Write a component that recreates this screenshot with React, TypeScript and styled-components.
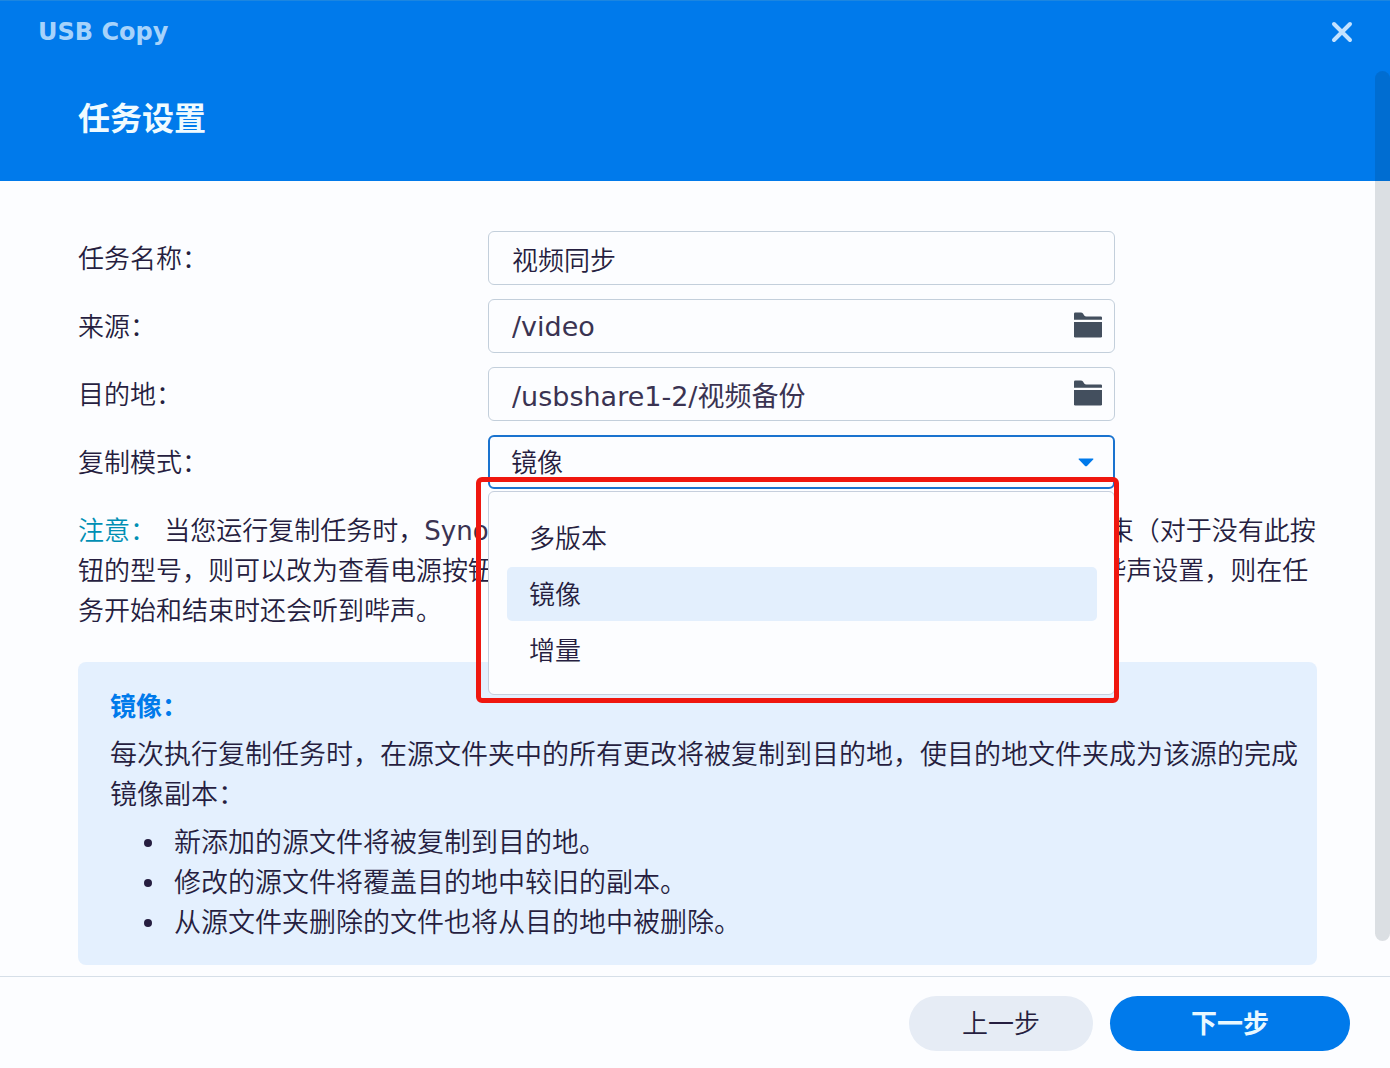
import React, { useState } from "react";
import styled, { createGlobalStyle } from "styled-components";

const font = '"DejaVu Sans", "Noto Sans CJK SC", sans-serif';
const ink = "#261e40";
const softInk = "#3a3352";
const blue = "#007aeb";

const GlobalStyle = createGlobalStyle`
  *, *::before, *::after { box-sizing: border-box; }
  body {
    margin: 0;
    background: #fcfdff;
    color: ${ink};
    font: 350 26px/40px ${font};
    text-spacing-trim: space-all;
  }
  input, select, button { font: inherit; color: inherit; }
`;

const Dialog = styled.div`
  position: relative;
  display: flex;
  flex-direction: column;
  min-height: 100vh;
`;

const Header = styled.header`
  padding: 0 37px 38px 38px;
  background: ${blue};
  border-top: 1px solid #1c86e0;
`;

const TitleBar = styled.div`
  display: flex;
  align-items: center;
  justify-content: space-between;
  height: 61px;
`;

const AppName = styled.span`
  font-size: 24px;
  font-weight: 700;
  color: #a6d3fb;
`;

const CloseButton = styled.button`
  display: flex;
  padding: 0;
  border: 0;
  background: none;
  color: #c4e3ff;
  cursor: pointer;
`;

const Heading = styled.h1`
  margin: 33px 0 0 40px;
  font-size: 32px;
  line-height: 48px;
  font-weight: 700;
  color: #f0fbff;
`;

const Content = styled.main`
  flex: 1;
  padding: 50px 73px 11px 78px;
`;

const Form = styled.form`
  display: flex;
  flex-direction: column;
  gap: 14px;
  margin-bottom: 22px;
`;

const Row = styled.div`
  display: grid;
  grid-template-columns: 410px minmax(0, 627px);
  align-items: center;
`;

const Label = styled.label`
  padding-top: 2px;
`;

const FieldBox = styled.div`
  position: relative;
`;

const fieldStyles = `
  display: block;
  width: 100%;
  height: 54px;
  border-radius: 6px;
  background: #fcfdff;
  outline: none;
`;

const TextField = styled.input<{ $path?: boolean }>`
  ${fieldStyles}
  padding: 0 60px 0 23px;
  border: 1px solid #c3cfdb;
  color: ${(p) => (p.$path ? softInk : ink)};
  font-size: ${(p) => (p.$path ? 27 : 26)}px;
  font-weight: ${(p) => (p.$path ? 400 : 350)};
`;

const SelectField = styled.select`
  ${fieldStyles}
  padding: 2px 60px 0 21px;
  appearance: none;
  border: 2px solid #1a73cf;
`;

const FolderButton = styled.button`
  position: absolute;
  top: 13px;
  right: 13px;
  display: flex;
  padding: 0;
  border: 0;
  background: none;
  cursor: pointer;
`;

const Caret = styled.svg`
  position: absolute;
  top: 23px;
  right: 21px;
  pointer-events: none;
`;

const Menu = styled.ul`
  position: absolute;
  z-index: 1;
  top: 56px;
  left: 0;
  right: 0;
  display: flex;
  flex-direction: column;
  gap: 2px;
  margin: 0;
  padding: 19px 17px 17px 18px;
  list-style: none;
  border: 1px solid #c6cfdd;
  border-radius: 6px;
  background: #fcfdff;
`;

const MenuItem = styled.li<{ $active: boolean }>`
  height: 54px;
  padding: 1px 22px 0;
  line-height: 54px;
  border-radius: 5px;
  background: ${(p) => (p.$active ? "#e3effd" : "transparent")};
  cursor: pointer;
`;

const Highlight = styled.div`
  position: absolute;
  z-index: 2;
  top: 42px;
  left: -12px;
  right: -4px;
  height: 226px;
  border: 5px solid #ef170f;
  border-radius: 6px;
  pointer-events: none;
`;

const Note = styled.p`
  margin: 0 0 31px;
`;

const NoteLabel = styled.span`
  color: #008fb4;
`;

const Product = styled.span`
  font-weight: 400;
  color: ${softInk};
`;

const Info = styled.section`
  padding: 25px 12px 22px 32px;
  border-radius: 8px;
  background: #e4f0fe;
  font-size: 27px;
`;

const InfoTitle = styled.h2`
  margin: 0 0 8px;
  font-size: 26px;
  line-height: 40px;
  color: ${blue};
`;

const InfoText = styled.p`
  margin: 0 0 8px;
`;

const InfoList = styled.ul`
  margin: 0;
  padding: 0 0 0 34px;
  list-style: none;
`;

const InfoItem = styled.li`
  display: flex;
  align-items: center;
  gap: 22px;

  &::before {
    content: "";
    flex: none;
    width: 8px;
    height: 8px;
    border-radius: 50%;
    background: ${ink};
  }
`;

const Footer = styled.footer`
  display: flex;
  justify-content: flex-end;
  gap: 17px;
  padding: 19px 40px 17px;
  border-top: 1px solid #d6dfe8;
`;

const PillButton = styled.button<{ $primary?: boolean }>`
  width: ${(p) => (p.$primary ? 240 : 184)}px;
  height: 55px;
  padding: 0;
  border: 0;
  border-radius: 28px;
  background: ${(p) => (p.$primary ? blue : "#e6ecf5")};
  color: ${(p) => (p.$primary ? "#e8f8ff" : ink)};
  font-weight: ${(p) => (p.$primary ? 700 : 350)};
  cursor: pointer;
`;

const ScrollThumb = styled.div`
  position: absolute;
  z-index: 3;
  top: 71px;
  right: 0;
  bottom: 127px;
  width: 15px;
  border-radius: 8px;
  background: rgba(0, 20, 40, 0.13);
`;

const FolderIcon = () => (
  <svg width="28" height="26" viewBox="0 0 28 26" fill="#434f5e" aria-hidden="true">
    <path d="M0 7.8V1.8Q0 .5 1.3.5H6.8Q8.2.5 9 1.6L10.2 3.4Q11 4.4 12.4 4.4H26.8Q28 4.4 28 5.6V7.8Z" />
    <path d="M0 10H28V24.2Q28 25.5 26.7 25.5H1.3Q0 25.5 0 24.2Z" />
  </svg>
);

const modes = ["多版本", "镜像", "增量"];

const App = () => {
  const [mode, setMode] = useState("镜像");

  return (
    <>
      <GlobalStyle />
      <Dialog role="dialog" aria-labelledby="title">
        <Header>
          <TitleBar>
            <AppName>USB Copy</AppName>
            <CloseButton type="button" aria-label="关闭">
              <svg width="22" height="22" viewBox="0 0 22 22" fill="none" stroke="currentColor" strokeWidth="4" strokeLinecap="round">
                <path d="M3 3L19 19M19 3L3 19" />
              </svg>
            </CloseButton>
          </TitleBar>
          <Heading id="title">任务设置</Heading>
        </Header>

        <Content>
          <Form>
            <Row>
              <Label htmlFor="name">任务名称：</Label>
              <TextField id="name" defaultValue="视频同步" />
            </Row>
            <Row>
              <Label htmlFor="source">来源：</Label>
              <FieldBox>
                <TextField id="source" $path defaultValue="/video" />
                <FolderButton type="button" aria-label="选择来源">
                  <FolderIcon />
                </FolderButton>
              </FieldBox>
            </Row>
            <Row>
              <Label htmlFor="target">目的地：</Label>
              <FieldBox>
                <TextField id="target" $path defaultValue="/usbshare1-2/视频备份" />
                <FolderButton type="button" aria-label="选择目的地">
                  <FolderIcon />
                </FolderButton>
              </FieldBox>
            </Row>
            <Row>
              <Label htmlFor="mode">复制模式：</Label>
              <FieldBox>
                <SelectField id="mode" value={mode} onChange={(e) => setMode(e.target.value)}>
                  {modes.map((m) => (
                    <option key={m}>{m}</option>
                  ))}
                </SelectField>
                <Caret width="16" height="9" viewBox="0 0 16 9" fill={blue} aria-hidden="true">
                  <path d="M1 .5H15Q16 .8 15.2 1.6L9.2 7.8Q8 8.8 6.8 7.8L.8 1.6Q0 .8 1 .5Z" />
                </Caret>
                <Menu role="listbox" aria-label="复制模式">
                  {modes.map((m) => (
                    <MenuItem key={m} role="option" aria-selected={m === mode} $active={m === mode} onClick={() => setMode(m)}>
                      {m}
                    </MenuItem>
                  ))}
                </Menu>
                <Highlight />
              </FieldBox>
            </Row>
          </Form>

          <Note>
            <NoteLabel>注意：</NoteLabel> 当您运行复制任务时，<Product>Synology NAS</Product> 上的复制指示灯会开始闪烁，直到此任务结束（对于没有此按钮的型号，则可以改为查看电源按钮旁边的状态指示灯）。 如果您已经在控制面板启用了哔声设置，则在任务开始和结束时还会听到哔声。
          </Note>

          <Info>
            <InfoTitle>镜像：</InfoTitle>
            <InfoText>每次执行复制任务时，在源文件夹中的所有更改将被复制到目的地，使目的地文件夹成为该源的完成镜像副本：</InfoText>
            <InfoList>
              <InfoItem>新添加的源文件将被复制到目的地。</InfoItem>
              <InfoItem>修改的源文件将覆盖目的地中较旧的副本。</InfoItem>
              <InfoItem>从源文件夹删除的文件也将从目的地中被删除。</InfoItem>
            </InfoList>
          </Info>
        </Content>

        <Footer>
          <PillButton type="button">上一步</PillButton>
          <PillButton type="button" $primary>
            下一步
          </PillButton>
        </Footer>
        <ScrollThumb />
      </Dialog>
    </>
  );
};

export default App;
